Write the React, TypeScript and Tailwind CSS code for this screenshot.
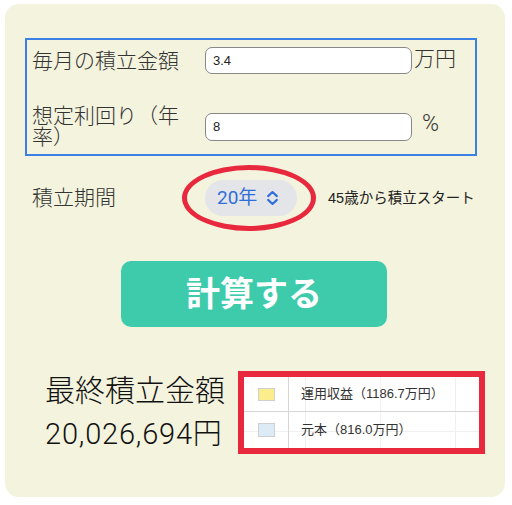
import React from 'react';

const base = "font-['Liberation_Sans','Noto_Sans_CJK_JP',sans-serif]";
const light = "font-['Roboto','Noto_Sans_CJK_JP',sans-serif] font-light";

const App: React.FC = () => {
  return (
    <div className={`w-[512px] h-[505px] bg-white pt-[4px] pl-[5px] ${base}`}>
      <div className="w-[500px] h-[493px] rounded-[14px] bg-[#f4f3de] pt-[34px] pl-[20px] relative">
        {/* Inputs box */}
        <div className={`w-[452px] h-[118px] border-2 border-[#3b80e4] pl-[5px] pt-[7px] text-[#333] ${light}`}>
          <div className="flex items-center h-[27px]">
            <div className="w-[150px] mr-[23px] text-[21px] leading-[22px]">毎月の積立金額</div>
            <div className={`w-[207px] h-[27px] rounded-[7px] border border-[#888] bg-white px-[7px] flex items-center text-[13px] text-[#222] font-normal ${base}`}>
              3.4
            </div>
            <div className="ml-[2px] text-[21px] leading-[22px] -mt-[4px]">万円</div>
          </div>
          <div className="flex items-center h-[46px] mt-[30px]">
            <div className="w-[150px] mr-[23px] text-[21px] leading-[21px]">想定利回り（年率）</div>
            <div className={`w-[207px] h-[28px] rounded-[7px] border border-[#888] bg-white px-[7px] flex items-center text-[13px] text-[#222] font-normal ${base}`}>
              8
            </div>
            <div className="ml-[10px] text-[23px] leading-[22px] -mt-[6px]">%</div>
          </div>
        </div>

        {/* Period row */}
        <div className={`flex items-center mt-[24px] h-[36px] pl-[7px] text-[#333] ${light}`}>
          <div className="w-[173px] text-[21px] leading-[22px]">積立期間</div>
          <div className="relative">
            <div className="w-[92px] h-[36px] rounded-full bg-[#e4e5e9] flex items-center pl-[12px] gap-[8px] text-[#2f6fd8]">
              <span className="text-[19px] leading-[20px] font-normal">20年</span>
              <svg width="15" height="18" viewBox="0 0 24 24" fill="none" stroke="currentColor" strokeWidth="3.4" strokeLinecap="round" strokeLinejoin="round">
                <path d="m5 9 7-6.5 7 6.5" />
                <path d="m5 15 7 6.5 7-6.5" />
              </svg>
            </div>
            <div className="absolute left-[-23px] top-[-15px] w-[134px] h-[66px] rounded-[50%] border-[5px] border-[#e8283c]" />
          </div>
          <div className={`ml-[31px] text-[14.5px] leading-[16px] text-[#222] font-normal ${base}`}>45歳から積立スタート</div>
        </div>

        {/* Button */}
        <div className="mt-[45px] ml-[96px] w-[266px] h-[66px] rounded-[10px] bg-[#3ecbac] flex items-center justify-center text-white text-[34px] font-bold leading-none">
          計算する
        </div>

        {/* Result */}
        <div className={`flex items-center mt-[44px] pl-[20px] ${light}`}>
          <div className="w-[193px] text-[#111]">
            <div className="text-[30px] leading-[38px]">最終積立金額</div>
            <div className="text-[29px] leading-[40px] mt-[4px] tracking-[0.8px]">20,026,694円</div>
          </div>
          <div className={`w-[247px] h-[83px] border-[6px] border-[#e8283c] bg-white relative overflow-hidden font-normal ${base}`}>
            <div className="absolute left-[61px] top-0 bottom-0 w-px bg-[#f0f0f0]" />
            <div className="absolute left-[136px] top-0 bottom-0 w-px bg-[#f0f0f0]" />
            <div className="absolute left-[211px] top-0 bottom-0 w-px bg-[#f0f0f0]" />
            <div className="absolute left-0 right-0 top-[54px] h-px bg-[#f0f0f0]" />
            <div className="relative flex h-[35px] border-b border-[#d6d6d6]">
              <div className="w-[45px] border-r border-[#d6d6d6] flex items-center justify-center">
                <div className="w-[17px] h-[13px] bg-[#fbec8c] border border-[#cfcfcf]" />
              </div>
              <div className="flex items-center pl-[12px] text-[13px] text-[#333]">運用収益（1186.7万円）</div>
            </div>
            <div className="relative flex h-[36px]">
              <div className="w-[45px] border-r border-[#d6d6d6] flex items-center justify-center">
                <div className="w-[17px] h-[14px] bg-[#dcebf6] border border-[#cfcfcf]" />
              </div>
              <div className="flex items-center pl-[12px] text-[13px] text-[#333]">元本（816.0万円）</div>
            </div>
          </div>
        </div>
      </div>
    </div>
  );
};

export default App;
